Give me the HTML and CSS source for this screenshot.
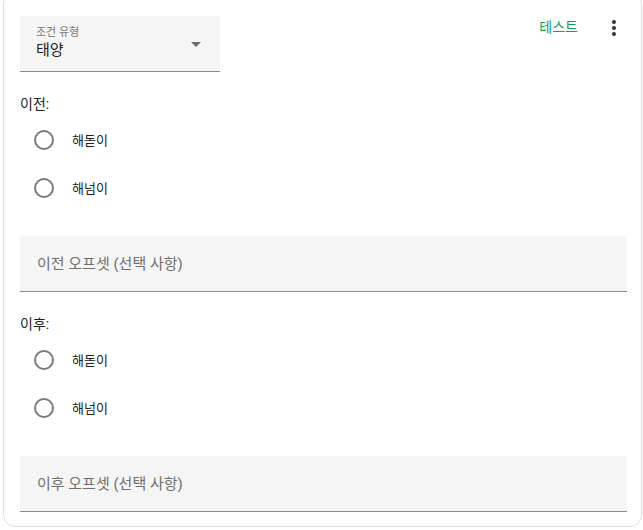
FILE: index.html
```html
<!DOCTYPE html>
<html lang="ko">
<head>
<meta charset="utf-8">
<link rel="stylesheet" href="styles.css">
</head>
<body>
<div class="card">
  <div class="header">
    <div class="select">
      <div class="select-text">
        <span class="select-label">조건 유형</span>
        <span class="select-value">태양</span>
      </div>
      <svg class="select-arrow" viewBox="0 0 24 24" width="24" height="24"><path d="M7 10l5 5 5-5z" fill="#6b6b6b"/></svg>
    </div>
    <div class="actions">
      <span class="test-btn">테스트</span>
      <svg class="menu-icon" viewBox="0 0 24 24" width="24" height="24"><path fill="#333" d="M12,16A2,2 0 0,1 14,18A2,2 0 0,1 12,20A2,2 0 0,1 10,18A2,2 0 0,1 12,16M12,10A2,2 0 0,1 14,12A2,2 0 0,1 12,14A2,2 0 0,1 10,12A2,2 0 0,1 12,10M12,4A2,2 0 0,1 14,6A2,2 0 0,1 12,8A2,2 0 0,1 10,6A2,2 0 0,1 12,4Z"/></svg>
    </div>
  </div>

  <div class="group-label">이전:</div>
  <div class="radios">
    <div class="radio-row"><span class="radio"></span><span class="radio-text">해돋이</span></div>
    <div class="radio-row"><span class="radio"></span><span class="radio-text">해넘이</span></div>
  </div>
  <div class="field"><span class="placeholder">이전 오프셋 (선택 사항)</span></div>

  <div class="group-label">이후:</div>
  <div class="radios">
    <div class="radio-row"><span class="radio"></span><span class="radio-text">해돋이</span></div>
    <div class="radio-row"><span class="radio"></span><span class="radio-text">해넘이</span></div>
  </div>
  <div class="field"><span class="placeholder">이후 오프셋 (선택 사항)</span></div>
</div>
</body>
</html>
```
FILE: styles.css
```css
html, body {
  margin: 0;
  padding: 0;
  background: #fff;
  overflow: hidden;
}
body {
  font-family: Roboto, "Noto Sans CJK KR", sans-serif;
  color: #212121;
}
.card {
  box-sizing: border-box;
  width: 639px;
  margin: -8px 0 0 3px;
  border: 1px solid #e0e0e0;
  border-radius: 12px;
  padding: 23px 14px 14px 16px;
  display: flex;
  flex-direction: column;
}
.header {
  display: flex;
  justify-content: space-between;
  align-items: flex-start;
}
.select {
  box-sizing: border-box;
  width: 200px;
  height: 56px;
  background: #f5f5f5;
  border-radius: 4px 4px 0 0;
  border-bottom: 1px solid #8c8c8c;
  display: flex;
  align-items: center;
  padding: 0 12px 0 16px;
}
.select-text {
  flex: 1;
  display: flex;
  flex-direction: column;
  margin-top: -2px;
}
.select-label {
  font-size: 11px;
  line-height: 14px;
  color: #757575;
}
.select-value {
  font-size: 15px;
  line-height: 20px;
  color: #212121;
}
.select-arrow {
  display: block;
}
.actions {
  display: flex;
  align-items: center;
  height: 24px;
  margin-top: 0;
  margin-right: 1px;
}
.test-btn {
  font-size: 14px;
  font-weight: 400;
  color: #129f5a;
  padding: 0 8px;
  line-height: 24px;
  margin-top: -2px;
}
.menu-icon {
  display: block;
  margin-left: 16px;
}
.group-label {
  margin-top: 22px;
  font-size: 14px;
  line-height: 20px;
  color: #212121;
}
.radios {
  margin-top: 2px;
  display: flex;
  flex-direction: column;
}
.radio-row {
  height: 48px;
  display: flex;
  align-items: center;
}
.radio {
  box-sizing: border-box;
  width: 20px;
  height: 20px;
  border: 2px solid #7a7a7a;
  border-radius: 50%;
  margin-left: 14px;
}
.radio-text {
  margin-left: 18px;
  font-size: 13px;
  color: #212121;
  margin-top: -1px;
}
.field {
  box-sizing: border-box;
  margin-top: 24px;
  height: 56px;
  background: #f5f5f5;
  border-radius: 4px 4px 0 0;
  border-bottom: 1px solid #8c8c8c;
  display: flex;
  align-items: center;
  padding: 0 16px 0 17px;
}
.placeholder {
  font-size: 15px;
  color: #6f6f6f;
  padding-bottom: 2px;
}
```
